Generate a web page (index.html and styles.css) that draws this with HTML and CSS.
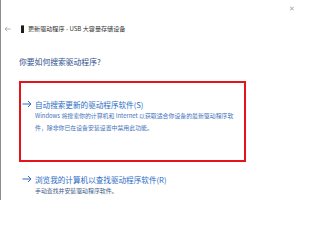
FILE: index.html
```html
<!DOCTYPE html>
<html lang="zh-CN">
<head>
<meta charset="utf-8">
<title>更新驱动程序</title>
<link rel="stylesheet" href="styles.css">
</head>
<body>
<div class="window">
  <div class="titlebar"><span class="close">✕</span></div>
  <div class="nav">
    <svg class="back" width="7" height="6" viewBox="0 0 7 6"><path d="M6.5 3H1 M3.3 0.7 L1 3 L3.3 5.3" fill="none" stroke="#a0a0a0" stroke-width="0.8"/></svg>
    <span class="device"></span>
    <span class="title">更新驱动程序 - USB 大容量存储设备</span>
  </div>
  <h1 class="question">你要如何搜索驱动程序?</h1>
  <div class="option selected">
    <svg class="arrow" width="10" height="8" viewBox="0 0 10 8"><path d="M0.5 4H9 M6 1 L9 4 L6 7" fill="none" stroke="#2a6cc4" stroke-width="1"/></svg>
    <div class="option-body">
      <div class="option-title">自动搜索更新的驱动程序软件(S)</div>
      <div class="option-desc blue">Windows 将搜索你的计算机和 Internet 以获取适合你设备的最新驱动程序软件，除非你已在设备安装设置中禁用此功能。</div>
    </div>
  </div>
  <div class="option second">
    <svg class="arrow" width="10" height="8" viewBox="0 0 10 8"><path d="M0.5 4H9 M6 1 L9 4 L6 7" fill="none" stroke="#2a6cc4" stroke-width="1"/></svg>
    <div class="option-body">
      <div class="option-title">浏览我的计算机以查找驱动程序软件(R)</div>
      <div class="option-desc">手动查找并安装驱动程序软件。</div>
    </div>
  </div>
</div>
</body>
</html>
```
FILE: styles.css
```css
html, body {
  margin: 0;
  padding: 0;
  background: #ffffff;
}
body {
  width: 300px;
  height: 200px;
  overflow: hidden;
  font-family: "Noto Sans CJK SC", "Noto Sans", sans-serif;
}
.window {
  box-sizing: border-box;
  width: 300px;
  height: 200px;
  border-left: 1px solid #8c8c8c;
  display: flex;
  flex-direction: column;
}
.titlebar {
  height: 16px;
  display: flex;
  justify-content: flex-end;
  align-items: center;
  padding-right: 5px;
}
.close {
  font-size: 7px;
  line-height: 8px;
  color: #a8a8a8;
}
.nav {
  margin-top: 8px;
  height: 10px;
  display: flex;
  align-items: center;
  padding-left: 3px;
}
.back {
  display: block;
}
.device {
  width: 3px;
  height: 8px;
  margin-left: 10px;
  background: #1e1e1e;
  border-top: 1px solid #6a7a6a;
  box-sizing: border-box;
}
.title {
  margin-left: 4px;
  font-size: 6.1px;
  line-height: 10px;
  color: #333333;
  white-space: nowrap;
}
.question {
  margin: 22px 0 0 18px;
  font-size: 7.8px;
  line-height: 12px;
  font-weight: normal;
  color: #2b4e8c;
}
.option {
  display: flex;
  align-items: flex-start;
  margin-left: 18px;
}
.selected {
  margin-top: 13px;
  box-sizing: border-box;
  width: 227px;
  height: 81px;
  border: 2px solid #e5131a;
  padding: 15.5px 0 0 1px;
}
.second {
  margin-top: 11.5px;
  padding-left: 3px;
}
.arrow {
  display: block;
  margin-top: 1.5px;
  width: 10px;
  flex: none;
}
.option-body {
  margin-left: 3px;
  width: 200px;
}
.option-title {
  font-size: 7.6px;
  line-height: 11px;
  color: #2a6cc4;
  white-space: nowrap;
}
.option-desc {
  font-size: 5.9px;
  line-height: 12.5px;
  color: #3d5a85;
}
.option-desc.blue {
  color: #3f72bb;
}
.second .option-desc {
  line-height: 11px;
}
```
